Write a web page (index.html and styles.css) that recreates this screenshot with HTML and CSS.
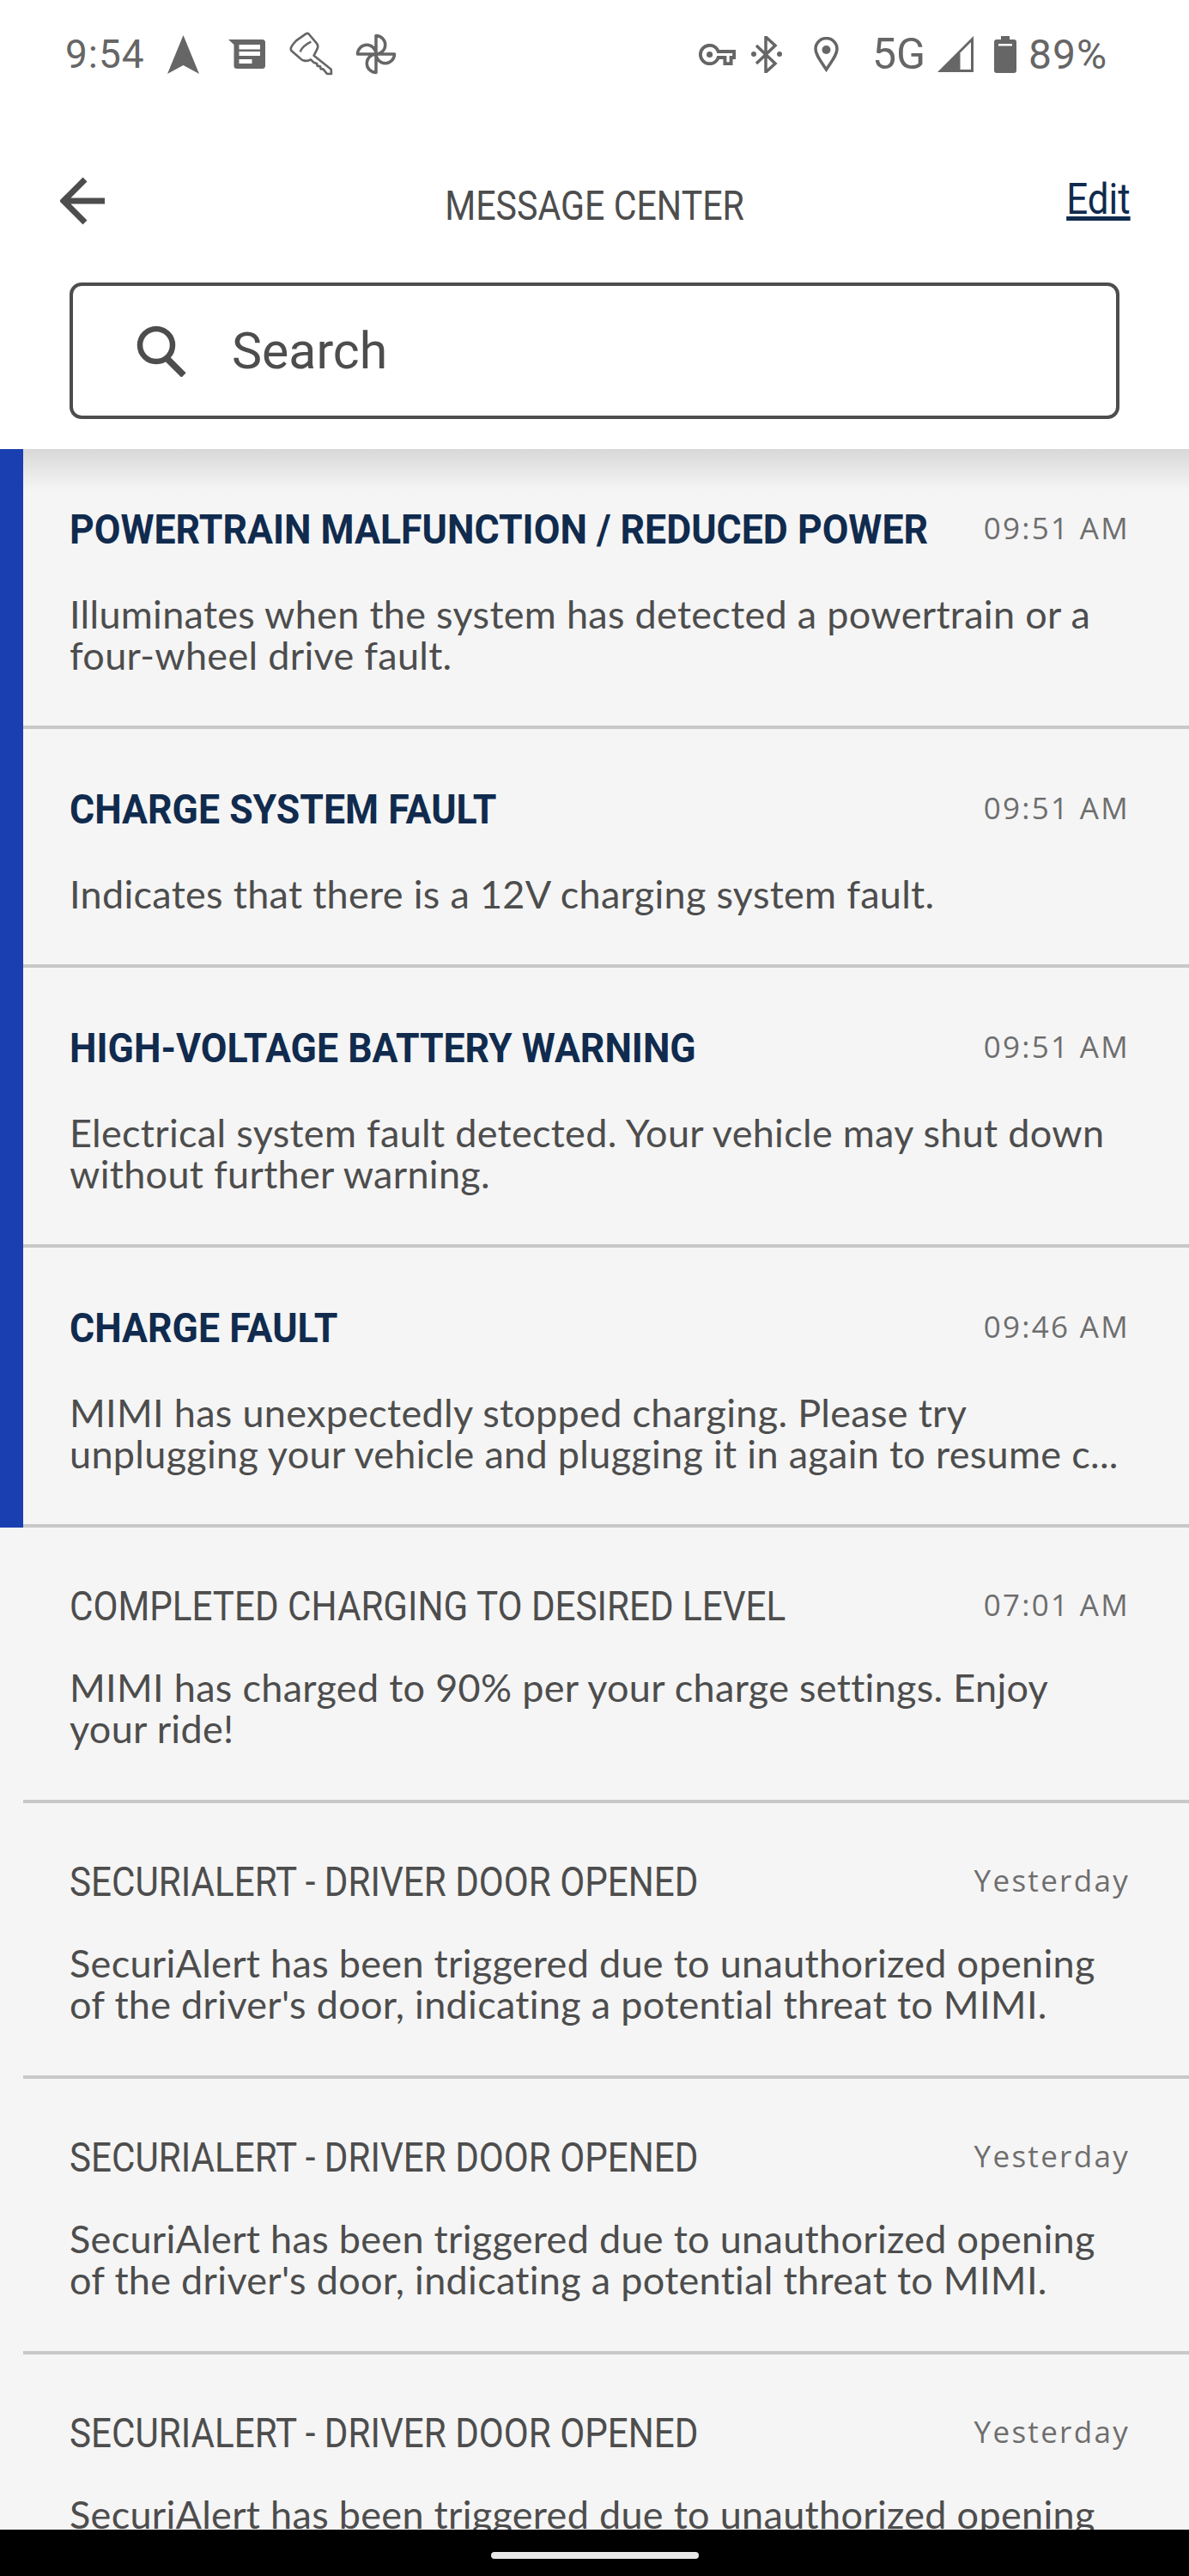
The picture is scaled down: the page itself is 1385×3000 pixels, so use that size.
FILE: index.html
```html
<!DOCTYPE html>
<html lang="en">
<head>
    <meta charset="UTF-8">
    <meta name="viewport" content="width=device-width, initial-scale=1.0">
    <title>Message Center</title>
    <link rel="stylesheet" href="styles.css">
</head>
<body>
    <div class="screen">
        <div class="top">
            <div class="status">
                <div class="status-left">
                    <span class="clock">9:54</span>
                    <svg class="ic-nav" width="37" height="45" viewBox="0 0 37 45"><path d="M18.5 0L37 45 18.5 35 0 45z" fill="#666"/></svg>
                    <svg class="ic-news" width="43" height="34" viewBox="0 0 43 34"><path d="M0 0H39.5Q43 0 43 3.5V30.5Q43 34 39.5 34H10Q6.500 34 6.500 30.5V6z" fill="#666"/><path d="M12.500 6H37V11.500H12.500zM12.500 14H37V19H12.500zM12.500 23H27.500V28H12.500z" fill="#fff"/></svg>
                    <svg class="ic-key" width="52" height="52" viewBox="50 25 156 156"><path d="M108 32Q114 29 119 34L146 66Q152 74 148 84L136 108 196 156 197 172H182L168 155H160L158 146 148 144 146 136 135 132 125 122Q115 128 102 126 94 125 88 118L58 92Q53 87 57 78 62 68 74 56zM88 95Q95 75 126 60" fill="none" stroke="#666" stroke-width="8" stroke-linejoin="round"/></svg>
                    <svg class="ic-fan" width="48" height="48" viewBox="0 0 48 48"><path d="M24 24V2.500A10.750 10.750 0 0 1 24 24H45.500A10.750 10.750 0 0 1 24 24V45.500A10.750 10.750 0 0 1 24 24H2.500A10.750 10.750 0 0 1 24 24z" fill="none" stroke="#666" stroke-width="3.500" stroke-linejoin="round"/></svg>
                </div>
                <div class="status-right">
                    <svg class="ic-vpn" width="43" height="25" viewBox="0 5 24 14"><path d="M12.650 10C11.830 7.670 9.610 6 7 6c-3.310 0-6 2.690-6 6s2.690 6 6 6c2.610 0 4.830-1.670 5.650-4H17v4h4v-4h2v-4z" fill="none" stroke="#666" stroke-width="2.200"/><circle cx="7" cy="12" r="2" fill="#666"/></svg>
                    <svg class="ic-bt" width="37" height="43" viewBox="0 0 37 43"><path d="M6 11L28 32 17 42V1L28 11 6 32" fill="none" stroke="#666" stroke-width="3.500"/><circle cx="3" cy="21" r="3" fill="#666"/><circle cx="33" cy="21" r="3" fill="#666"/></svg>
                    <svg class="ic-pin" width="29" height="41" viewBox="0 0 29 41"><path d="M14.500 38C8 28 2 21 2 14A12.500 12.500 0 0 1 27 14C27 21 21 28 14.500 38z" fill="none" stroke="#666" stroke-width="3.500"/><circle cx="14.500" cy="15" r="5" fill="#666"/></svg>
                    <span class="net">5G</span>
                    <svg class="ic-signal" width="42" height="42" viewBox="0 0 42 42"><path d="M0 42L42 0V42z" fill="#666"/><path d="M26.500 19.500L39 7V39H26.500z" fill="#fff"/></svg>
                    <svg class="ic-batt" width="26" height="43" viewBox="0 0 26 43"><path d="M8 0H18V4H23Q26 4 26 7V40Q26 43 23 43H3Q0 43 0 40V7Q0 4 3 4H8z" fill="#666"/><path d="M5 9H21V11.500H5z" fill="#fff"/></svg>
                    <span class="pct">89%</span>
                </div>
            </div>
            <div class="nav">
                <svg class="back" width="54" height="56" viewBox="0 0 54 56"><path d="M29 3L4 28 29 53M4 28H52" fill="none" stroke="#4d4d4d" stroke-width="7"/></svg>
                <div class="nav-title">MESSAGE CENTER</div>
                <a class="edit">Edit</a>
            </div>
            <div class="search">
                <svg width="60" height="60" viewBox="0 0 60 60"><circle cx="23" cy="23" r="19" fill="none" stroke="#4d4d4d" stroke-width="6.500"/><path d="M36 39L55 58" fill="none" stroke="#4d4d4d" stroke-width="7.500"/></svg>
                <span class="search-text">Search</span>
            </div>
        </div>

        <div class="list">
            <div class="msg unread">
                <div class="msg-in">
                    <div class="msg-head">
                        <div class="msg-title">POWERTRAIN MALFUNCTION / REDUCED POWER</div>
                        <div class="msg-time">09:51 AM</div>
                    </div>
                    <p class="msg-body">Illuminates when the system has detected a powertrain or a<br>four-wheel drive fault.</p>
                </div>
            </div>
            <div class="msg unread">
                <div class="msg-in">
                    <div class="msg-head">
                        <div class="msg-title">CHARGE SYSTEM FAULT</div>
                        <div class="msg-time">09:51 AM</div>
                    </div>
                    <p class="msg-body">Indicates that there is a 12V charging system fault.</p>
                </div>
            </div>
            <div class="msg unread">
                <div class="msg-in">
                    <div class="msg-head">
                        <div class="msg-title">HIGH-VOLTAGE BATTERY WARNING</div>
                        <div class="msg-time">09:51 AM</div>
                    </div>
                    <p class="msg-body">Electrical system fault detected. Your vehicle may shut down<br>without further warning.</p>
                </div>
            </div>
            <div class="msg unread">
                <div class="msg-in">
                    <div class="msg-head">
                        <div class="msg-title">CHARGE FAULT</div>
                        <div class="msg-time">09:46 AM</div>
                    </div>
                    <p class="msg-body">MIMI has unexpectedly stopped charging. Please try<br>unplugging your vehicle and plugging it in again to resume c...</p>
                </div>
            </div>
            <div class="msg">
                <div class="msg-in">
                    <div class="msg-head">
                        <div class="msg-title">COMPLETED CHARGING TO DESIRED LEVEL</div>
                        <div class="msg-time">07:01 AM</div>
                    </div>
                    <p class="msg-body">MIMI has charged to 90% per your charge settings. Enjoy<br>your ride!</p>
                </div>
            </div>
            <div class="msg">
                <div class="msg-in">
                    <div class="msg-head">
                        <div class="msg-title">SECURIALERT - DRIVER DOOR OPENED</div>
                        <div class="msg-time">Yesterday</div>
                    </div>
                    <p class="msg-body">SecuriAlert has been triggered due to unauthorized opening<br>of the driver's door, indicating a potential threat to MIMI.</p>
                </div>
            </div>
            <div class="msg">
                <div class="msg-in">
                    <div class="msg-head">
                        <div class="msg-title">SECURIALERT - DRIVER DOOR OPENED</div>
                        <div class="msg-time">Yesterday</div>
                    </div>
                    <p class="msg-body">SecuriAlert has been triggered due to unauthorized opening<br>of the driver's door, indicating a potential threat to MIMI.</p>
                </div>
            </div>
            <div class="msg">
                <div class="msg-in">
                    <div class="msg-head">
                        <div class="msg-title">SECURIALERT - DRIVER DOOR OPENED</div>
                        <div class="msg-time">Yesterday</div>
                    </div>
                    <p class="msg-body">SecuriAlert has been triggered due to unauthorized opening</p>
                </div>
            </div>
        </div>

        <div class="navbar"><div class="handle"></div></div>
    </div>
</body>
</html>
```

FILE: styles.css
```css
body {
    margin: 0;
    background-color: #fff;
    font-family: 'Lato', sans-serif;
}

.screen {
    height: 3000px;
    display: flex;
    flex-direction: column;
    overflow: hidden;
}

.top {
    height: 523px;
    flex: none;
    background-color: #fff;
}

/* status bar */
.status {
    height: 126px;
    padding: 0 96px 0 76px;
    display: flex;
    justify-content: space-between;
    align-items: center;
    font-family: 'Roboto', sans-serif;
    font-size: 46px;
    color: #666;
}

.status-left,
.status-right {
    display: flex;
    align-items: center;
}

.clock { width: 92px; letter-spacing: 1px; }
.ic-nav { margin-left: 27px; }
.ic-news { margin-left: 34px; }
.ic-key { margin-left: 28px; }
.ic-fan { margin-left: 25px; }

.ic-bt { margin-left: 18px; }
.ic-pin { margin-left: 36px; }
.net { margin-left: 39px; width: 61px; font-size: 50px; }
.ic-signal { margin-left: 15px; }
.ic-batt { margin-left: 24px; }
.pct { margin-left: 14px; width: 91px; font-size: 48px; letter-spacing: 1px; }

/* title row */
.nav {
    height: 203px;
    padding: 0 68px;
    display: grid;
    grid-template-columns: 1fr auto 1fr;
    align-items: start;
}

.back { margin-top: 80px; margin-left: 2px; }

.nav-title {
    margin-top: 84px;
    font-family: 'Roboto', sans-serif;
    font-size: 49px;
    line-height: 60px;
    color: #4d4d4d;
    transform: scaleX(0.84);
}

.edit {
    justify-self: end;
    margin-top: 76px;
    font-family: 'Roboto', sans-serif;
    font-size: 50px;
    line-height: 60px;
    color: #102b4e;
    text-decoration: underline;
    transform: scaleX(0.88);
    transform-origin: right;
}

.search {
    height: 159px;
    box-sizing: border-box;
    margin: 0 81px;
    padding-left: 74px;
    border: 4px solid #4d4d4d;
    border-radius: 14px;
    display: flex;
    align-items: center;
}

.search-text {
    margin-left: 51px;
    font-family: 'Roboto', sans-serif;
    font-size: 59px;
    color: #4d4d4d;
}

/* message list */
.list {
    flex: 1;
    min-height: 0;
    overflow: hidden;
    position: relative;
    background-color: #f5f5f5;
}

.list::before {
    content: "";
    position: absolute;
    left: 27px;
    right: 0;
    top: 0;
    height: 48px;
    background: linear-gradient(#d8d8d8, rgba(245, 245, 245, 0));
}

.msg {
    padding-left: 27px;
}

.msg.unread {
    background-color: #1a3fb0;
}

.msg-in {
    height: 321px;
    box-sizing: border-box;
    padding: 60px 69px 0 54px;
    background-color: #f5f5f5;
    border-bottom: 4px solid #c8c8c8;
}

.msg.unread .msg-in {
    height: 326px;
    padding-top: 62px;
}

.msg:nth-child(2) .msg-in {
    height: 278px;
}

.msg-head {
    display: flex;
    align-items: center;
    height: 62px;
}

/* no condensed font here, so the roboto is squeezed */
.msg-title {
    flex: 1;
    min-width: 0;
    font-family: 'Roboto', sans-serif;
    font-size: 49px;
    white-space: nowrap;
    color: #4d4d4d;
    transform: scaleX(0.86);
    transform-origin: left;
}

.msg.unread .msg-title {
    font-weight: bold;
    color: #102b4e;
    transform: scaleX(0.91);
}

.msg-time {
    flex: none;
    margin-top: -4px;
    font-family: 'Open Sans', sans-serif;
    font-size: 35px;
    letter-spacing: 2.300px;
    color: #6e6e6e;
}

.msg-body {
    margin: 40px 0 0;
    font-size: 45px;
    line-height: 48px;
    letter-spacing: 0.300px;
    color: #4d4d4d;
    white-space: nowrap;
}

.msg.unread .msg-body {
    margin-top: 44px;
}

.navbar {
    height: 54px;
    flex: none;
    background-color: #000;
    display: flex;
    justify-content: center;
    padding-top: 26px;
    box-sizing: border-box;
}

.handle {
    width: 242px;
    height: 8px;
    border-radius: 4px;
    background-color: #e8e8e8;
}
```
